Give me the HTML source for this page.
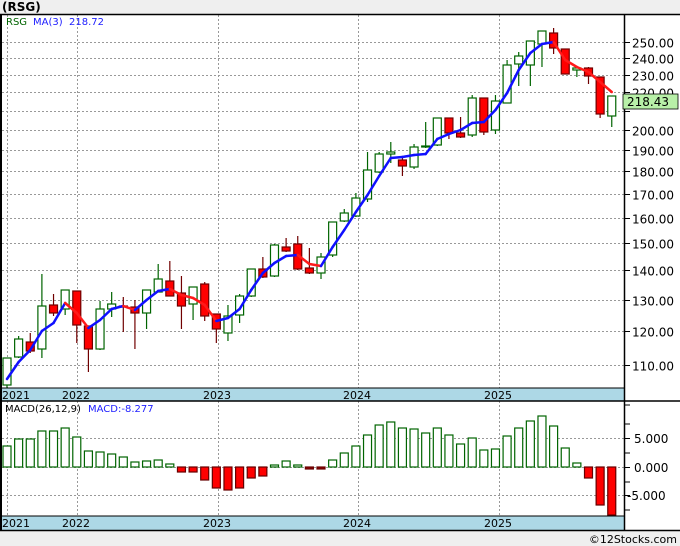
<!DOCTYPE html>
<html><head><meta charset="utf-8"><style>
html,body{margin:0;padding:0;width:680px;height:546px;overflow:hidden;background:#fff;font-family:"DejaVu Sans","Liberation Sans",sans-serif}
svg{position:absolute;left:0;top:0}
</style></head><body>
<svg id="s" width="680" height="546" xmlns="http://www.w3.org/2000/svg" font-family="DejaVu Sans, Liberation Sans, sans-serif">
<rect x="0" y="0" width="680" height="546" fill="#fff"/>
<rect x="0" y="0" width="680" height="14" fill="#efefef"/>
<text x="2" y="11" font-size="12" font-weight="bold" fill="#000">(RSG)</text>
<rect x="0" y="531" width="680" height="15" fill="#efefef"/>
<text x="677" y="543" font-size="11" fill="#000" text-anchor="end">©12Stocks.com</text>
<rect x="0" y="388" width="624" height="13" fill="#add8e6"/>
<rect x="0" y="516" width="624" height="14" fill="#add8e6"/>
<g id="grid"></g>
<g id="macd"></g>
<g id="candles"></g>
<g id="ma"></g>
<line x1="0" y1="14.5" x2="680" y2="14.5" stroke="#000" stroke-width="1.5"/>
<line x1="0" y1="388" x2="624" y2="388" stroke="#000"/>
<line x1="0" y1="401" x2="680" y2="401" stroke="#000" stroke-width="1.5"/>
<line x1="0" y1="516" x2="624" y2="516" stroke="#000"/>
<line x1="0" y1="530.5" x2="680" y2="530.5" stroke="#000" stroke-width="1.5"/>
<line x1="1" y1="14" x2="1" y2="531" stroke="#000" stroke-width="2"/>
<line x1="624.5" y1="14" x2="624.5" y2="531" stroke="#000" stroke-width="1.5"/>
<g font-size="11" fill="#000">
<text x="2" y="399">2021</text><text x="62" y="399">2022</text><text x="203" y="399">2023</text><text x="343" y="399">2024</text><text x="484" y="399">2025</text>
<text x="2" y="527">2021</text><text x="62" y="527">2022</text><text x="203" y="527">2023</text><text x="343" y="527">2024</text><text x="484" y="527">2025</text>
</g>
<g font-size="10">
<text x="6" y="25" fill="#006400">RSG</text><text x="33" y="25" fill="#2020ff">MA(3)</text><text x="69" y="25" fill="#2020ff">218.72</text>
<text x="5" y="412" fill="#000">MACD(26,12,9)</text><text x="88" y="412" fill="#2020ff">MACD:-8.277</text>
</g>
<g id="axis" font-size="12" fill="#000"></g>
<rect x="623" y="94" width="55" height="15" fill="#b8f0a8" stroke="#000" stroke-width="0.8"/>
<text x="627" y="106" font-size="12" fill="#000">218.43</text>
</svg>
<script>
var NS="http://www.w3.org/2000/svg";
function el(p,t,a){var e=document.createElementNS(NS,t);for(var k in a)e.setAttribute(k,a[k]);document.getElementById(p).appendChild(e);return e;}
function Y(p){return 42+394*Math.log(250/p);}
var dash={"stroke":"#999","stroke-dasharray":"2,2","stroke-width":"1"};
function L(g,x1,y1,x2,y2,o){var a={x1:x1,y1:y1,x2:x2,y2:y2};for(var k in o)a[k]=o[k];return el(g,"line",a);}
[7,77,218,358,499].forEach(function(x){L("grid",x+.5,15,x+.5,388,dash);L("grid",x+.5,401,x+.5,516,dash);});
for(var p=110;p<=250;p+=10){var y=Math.round(Y(p))+.5;L("grid",2,y,624,y,dash);L("axis",624,y,630,y,{stroke:"#000"});
 if(p!=210){var t=el("axis","text",{x:632,y:y+5});t.textContent=p.toFixed(2);}}
[[5,"5.000",438],[0,"0.000",467],[-5,"-5.000",495]].forEach(function(m){L("grid",2,m[2]+.5,624,m[2]+.5,dash);L("axis",624,m[2]+.5,630,m[2]+.5,{stroke:"#000"});var t=el("axis","text",{x:m[0]<0?627:634,y:m[2]+5});t.textContent=m[1];});
[405,424,453,482,510].forEach(function(y){L("axis",624,y,630,y,{stroke:"#000"});});
function X(i){return 7+(i-1)*11.63;}
var C=[[358,385,358,388,"g"],[339,357,336,358,"g"],[342,351,333,353,"r"],[306,349,274,358,"g"],[305,313,294,316,"r"],[290,309,290,315,"g"],[291,325,291,343,"r"],[326,349,326,372,"r"],[309,349,301,350,"g"],[304,309,292,317,"g"],[306,307,297,332,"r"],[307,313,300,349,"r"],[290,313,290,329,"g"],[279,292,264,292,"g"],[281,296,261,296,"r"],[293,306,276,329,"r"],[287,304,287,320,"g"],[284,316,282,321,"r"],[314,329,314,343,"r"],[316,333,305,341,"g"],[296,315,294,323,"g"],[269,296,269,297,"g"],[269,277,257,278,"r"],[245,276,244,277,"g"],[247,251,238,252,"r"],[244,269,236,270,"r"],[268,273,248,274,"r"],[257,273,253,279,"g"],[222,255,222,257,"g"],[213,221,209,222,"g"],[198,216,193,217,"g"],[170,199,152,202,"g"],[154,172,152,173,"g"],[152,154,142,163,"g"],[160,166,157,176,"r"],[147,167,144,169,"g"],[146,147,122,148,"g"],[118,145,118,146,"g"],[118,133,118,139,"r"],[133,137,117,138,"r"],[98,135,95,137,"g"],[98,132,98,135,"r"],[101,130,95,134,"g"],[65,103,60,103,"g"],[56,64,52,86,"g"],[41,65,41,86,"g"],[31,44,31,67,"g"],[33,48,28,54,"r"],[49,74,49,74,"r"],[68,70,66,77,"g"],[68,76,67,84,"r"],[77,114,77,118,"r"],[96,116,96,127,"g"]];
C.forEach(function(c,i){var x=X(i+1),g=c[4]=="g",col=g?"#006400":"#700000";
 L("candles",x,c[2],x,c[3],{stroke:col,"stroke-width":1.2});
 el("candles","rect",{x:x-4,y:c[0],width:8,height:Math.max(1,c[1]-c[0]),fill:g?"#fff":"#f00",stroke:col,"stroke-width":1.2});});
var M=[379,362,350,331,323,303,313,328,320,309,306,310,300,291,289,295,298,305,321,318,309,290,273,263,256,255,264,266,247,230,212,195,176,158,157,155,154,139,134,130,123,122,110,93,70,53,44,42,60,67,72,82,92];
for(var i=0;i<M.length-1;i++){L("ma",X(i+1),M[i],X(i+2),M[i+1],{stroke:M[i+1]<=M[i]?"#1010ff":"#ff1a1a","stroke-width":2.5,"stroke-linecap":"round"});}
var H=[446,439,439,431,431,428,437,451,452,454,457,462,461,460,464,472,472,480,488,490,488,478,476,465,461,465,469,469,460,453,446,435,425,422,428,429,433,428,435,444,438,450,449,436,428,421,416,426,448,463,478,505,515];
H.forEach(function(h,i){var x=X(i+1),z=467,up=h<z;var dk=(i==26||i==27);
 el("macd","rect",{x:x-4,y:Math.min(h,z),width:8,height:Math.max(1,Math.abs(z-h)),fill:up?"#fff":(dk?"#900":"#f00"),stroke:up?"#006400":"#600","stroke-width":1.2});});
</script>
</body></html>
